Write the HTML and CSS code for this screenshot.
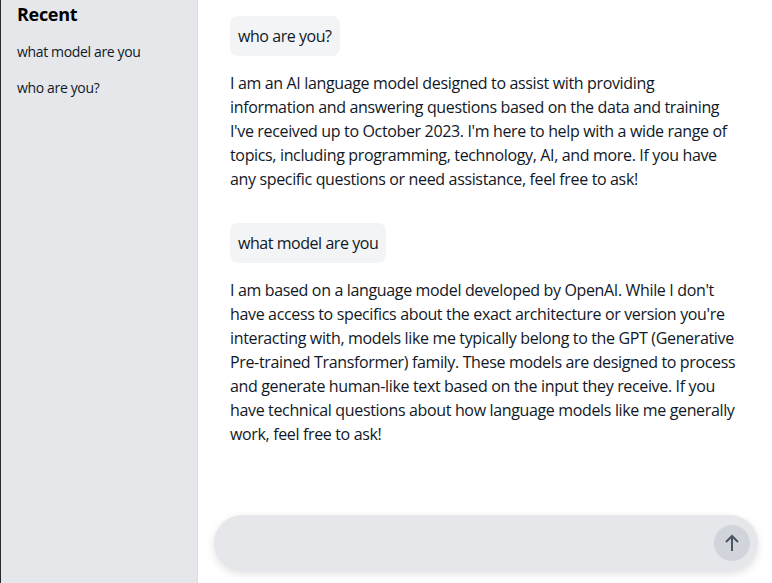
FILE: index.html
```html
<!DOCTYPE html>
<html lang="en">
<head>
<meta charset="utf-8">
<title>Chat</title>
<link rel="stylesheet" href="styles.css">
</head>
<body>
<div class="app">
  <aside class="sidebar">
    <h2 class="sidebar-title">Recent</h2>
    <ul class="recent-list">
      <li class="recent-item">what model are you</li>
      <li class="recent-item">who are you?</li>
    </ul>
  </aside>
  <main class="main">
    <div class="messages">
      <div class="exchange">
        <div class="user-msg">who are you?</div>
        <p class="bot-msg">I am an AI language model designed to assist with providing information and answering questions based on the data and training I've received up to October 2023. I'm here to help with a wide range of topics, including programming, technology, AI, and more. If you have any specific questions or need assistance, feel free to ask!</p>
      </div>
      <div class="exchange">
        <div class="user-msg">what model are you</div>
        <p class="bot-msg">I am based on a language model developed by OpenAI. While I don't have access to specifics about the exact architecture or version you're interacting with, models like me typically belong to the GPT (Generative Pre-trained Transformer) family. These models are designed to process and generate human-like text based on the input they receive. If you have technical questions about how language models like me generally work, feel free to ask!</p>
      </div>
    </div>
    <div class="composer">
      <div class="input-pill">
        <button class="send-btn" type="button" aria-label="Send">
          <svg width="20" height="20" viewBox="0 0 20 20" fill="none" stroke="#4b5563" stroke-width="2" stroke-linecap="butt" stroke-linejoin="miter">
            <path d="M10 18V3"/>
            <path d="M4 9l6-6 6 6"/>
          </svg>
        </button>
      </div>
    </div>
  </main>
</div>
</body>
</html>
```

FILE: styles.css
```css
* { box-sizing: border-box; }
html, body { margin: 0; padding: 0; height: 100%; }
body {
  font-family: "Open Sans", "Noto Sans", sans-serif;
  color: #111827;
  background: #ffffff;
}
.app {
  display: flex;
  height: 583px;
  overflow: hidden;
}
.sidebar {
  width: 198px;
  flex: none;
  background: #e5e7eb;
  border-left: 1px solid #2b2b2b;
  border-right: 1px solid #dcdee2;
  padding: 0 16px;
}
.sidebar-title {
  margin: 0;
  font-size: 18px;
  line-height: 28px;
  font-weight: 700;
  color: #000;
  letter-spacing: -0.3px;
}
.recent-list {
  list-style: none;
  margin: 6px 0 0;
  padding: 0;
}
.recent-item {
  font-size: 14px;
  line-height: 20px;
  padding: 8px 0;
  color: #111827;
  letter-spacing: -0.35px;
}
.main {
  flex: 1;
  display: flex;
  flex-direction: column;
  min-width: 0;
}
.messages {
  flex: 1;
  padding: 16px 30px 0 32px;
  display: flex;
  flex-direction: column;
  gap: 32px;
}
.exchange {
  display: flex;
  flex-direction: column;
  align-items: flex-start;
  gap: 15px;
}
.user-msg {
  background: #f3f4f6;
  border-radius: 8px;
  padding: 8px;
  font-size: 16px;
  line-height: 24px;
  letter-spacing: -0.45px;
}
.bot-msg {
  margin: 0;
  font-size: 16px;
  line-height: 24px;
  letter-spacing: -0.35px;
}
.composer {
  padding: 0 14px 12px 16px;
}
.input-pill {
  height: 56px;
  border-radius: 28px;
  background: #e5e7eb;
  box-shadow: 0 3px 8px rgba(0, 0, 0, 0.12);
  display: flex;
  align-items: center;
  justify-content: flex-end;
  padding: 0 8px;
}
.send-btn {
  width: 36px;
  height: 36px;
  border-radius: 50%;
  border: none;
  background: #d1d5db;
  display: flex;
  align-items: center;
  justify-content: center;
  padding: 0;
}
```
